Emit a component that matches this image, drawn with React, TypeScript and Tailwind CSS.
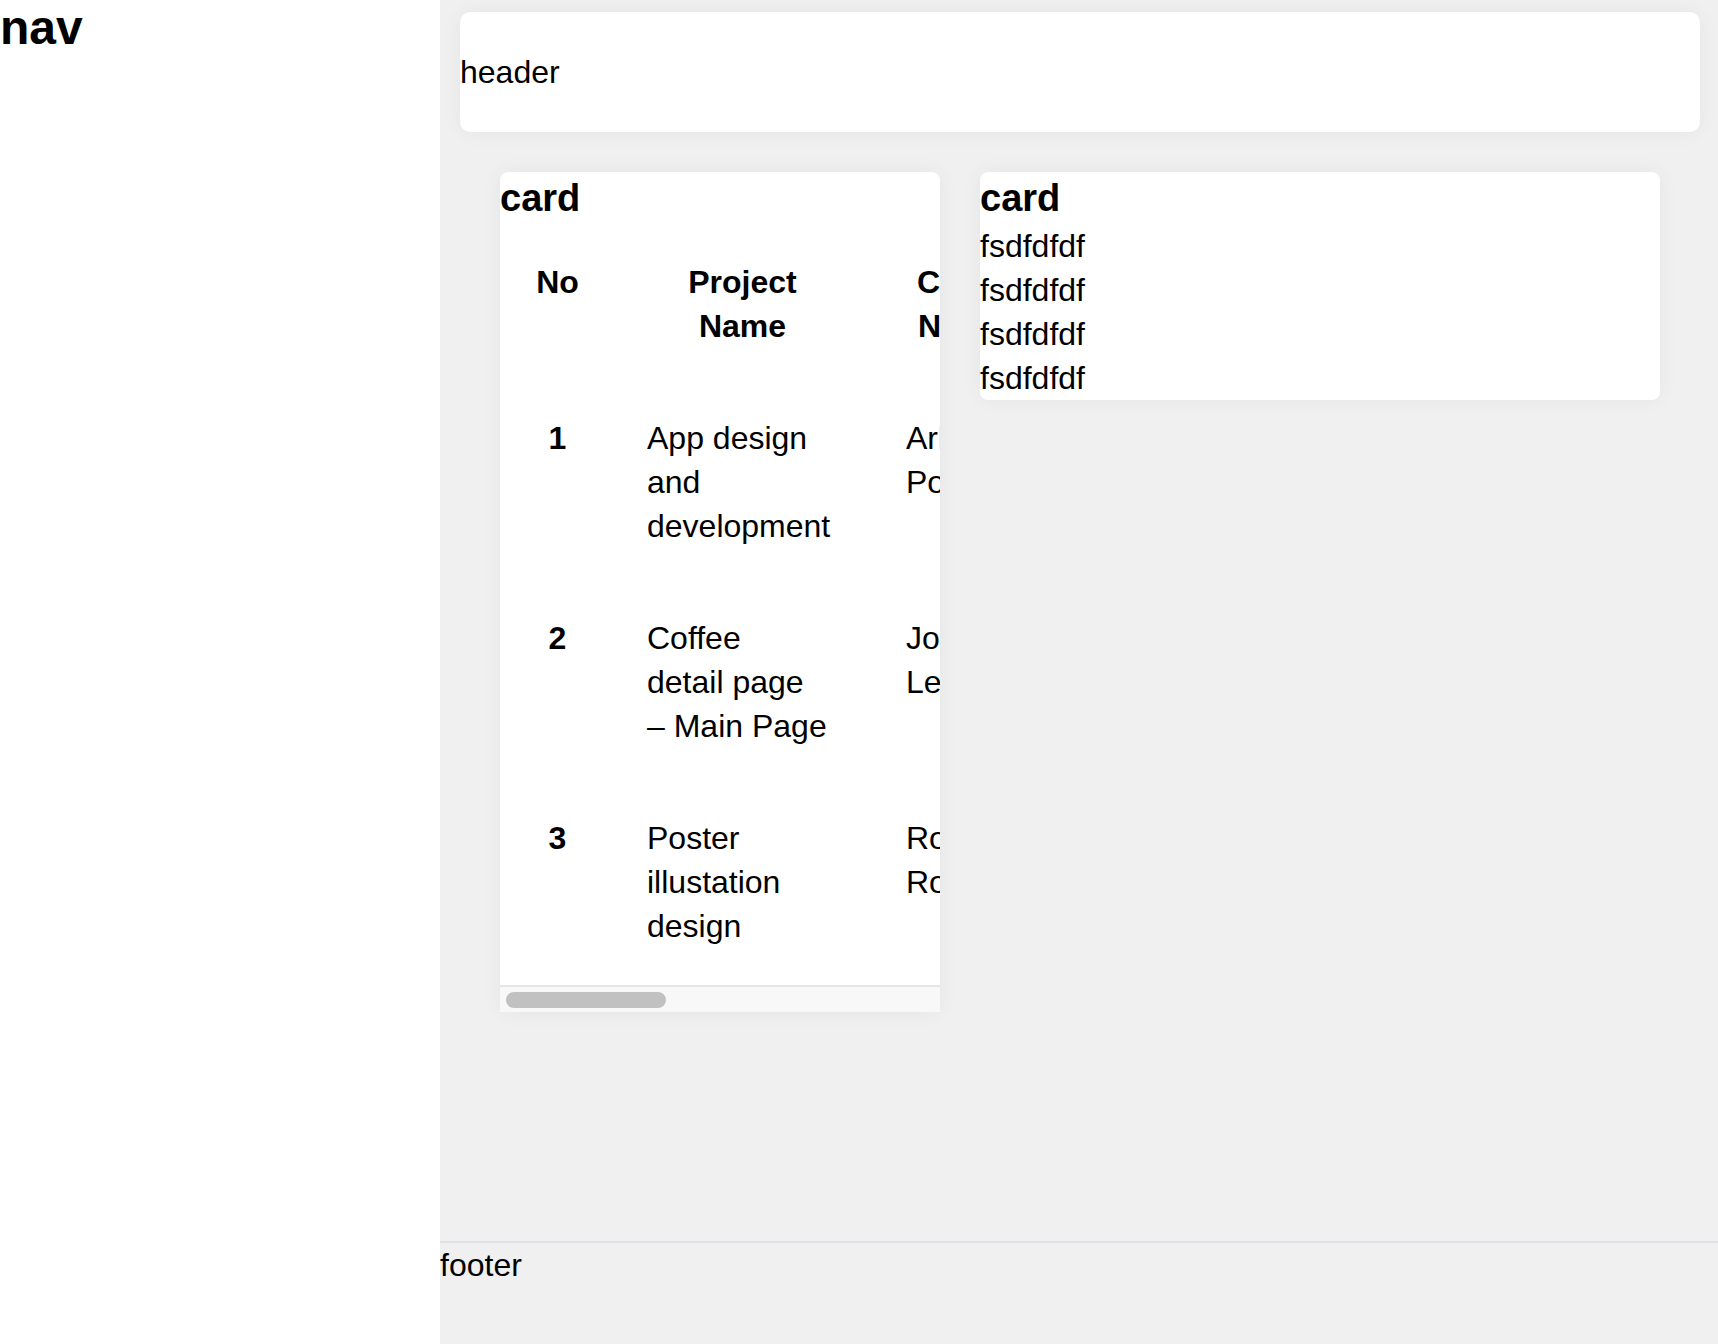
import React from 'react'

// Rows shown in the project table
const projects = [
  { no: 1, name: ['App design', 'and', 'development'], client: 'Arlene Powell', price: '$4,200', deadline: 'Mar 12', status: 'In progress' },
  { no: 2, name: ['Coffee', 'detail page', '– Main Page'], client: 'John Lee', price: '$1,150', deadline: 'Apr 02', status: 'Review' },
  { no: 3, name: ['Poster', 'illustation', 'design'], client: 'Ronald Rogers', price: '$860', deadline: 'Apr 20', status: 'Done' },
]

function ProjectCard() {
  return (
    <div className="w-[440px] shrink-0 bg-white rounded-t-[8px] shadow-[0_0_20px_rgba(0,0,0,0.05)] flex flex-col">
      <h3 className="text-[38px] leading-[52px] font-bold">card</h3>

      {/* Table, clipped horizontally */}
      <div className="overflow-hidden pb-[1px]">
        <table className="border-separate border-spacing-[4px] text-[32px] leading-[44px]">
          <thead>
            <tr>
              <th className="px-[32px] py-[32px] align-top text-center font-bold">
                <div className="w-[43px]">No</div>
              </th>
              <th className="px-[32px] py-[32px] align-top text-center font-bold">
                <div className="w-[191px]">Project Name</div>
              </th>
              <th className="px-[32px] py-[32px] align-top text-center font-bold">
                <div className="w-[111px]">Client Name</div>
              </th>
              <th className="px-[32px] py-[32px] align-top text-center font-bold">Price</th>
              <th className="px-[32px] py-[32px] align-top text-center font-bold">Deadline</th>
              <th className="px-[32px] py-[32px] align-top text-center font-bold">Status</th>
            </tr>
          </thead>
          <tbody>
            {projects.map((p) => (
              <tr key={p.no}>
                <td className="px-[32px] py-[32px] align-top text-center font-bold">{p.no}</td>
                <td className="px-[32px] py-[32px] align-top text-left">
                  {p.name.map((line) => (
                    <div key={line}>{line}</div>
                  ))}
                </td>
                <td className="px-[32px] py-[32px] align-top text-left">{p.client}</td>
                <td className="px-[32px] py-[32px] align-top text-left">{p.price}</td>
                <td className="px-[32px] py-[32px] align-top text-left">{p.deadline}</td>
                <td className="px-[32px] py-[32px] align-top text-left">{p.status}</td>
              </tr>
            ))}
          </tbody>
        </table>
      </div>

      {/* Horizontal scrollbar */}
      <div className="h-[27px] border-t-2 border-[#e6e6e6] bg-[#f8f8f8] pt-[5px] pl-[6px]">
        <div className="h-[16px] w-[160px] rounded-full bg-[#c1c1c1]" />
      </div>
    </div>
  )
}

function TextCard() {
  return (
    <div className="flex-1 bg-white rounded-[8px] shadow-[0_0_20px_rgba(0,0,0,0.05)]">
      <h3 className="text-[38px] leading-[52px] font-bold">card</h3>
      <div className="text-[32px] leading-[44px]">
        <p>fsdfdfdf</p>
        <p>fsdfdfdf</p>
        <p>fsdfdfdf</p>
        <p>fsdfdfdf</p>
      </div>
    </div>
  )
}

export default function App() {
  return (
    <div
      className="flex h-[1344px] w-full text-black"
      style={{ fontFamily: '"Liberation Sans", Arial, sans-serif' }}
    >
      {/* Sidebar */}
      <nav className="w-[440px] shrink-0 bg-white">
        <h2 className="text-[48px] leading-[55px] font-bold">nav</h2>
      </nav>

      {/* Main */}
      <div className="flex-1 flex flex-col bg-[#f0f0f0] min-w-0">
        <div className="flex-1 pl-[20px] pr-[18px] pt-[12px]">
          <header className="h-[120px] bg-white rounded-[10px] shadow-[0_0_20px_rgba(0,0,0,0.05)] flex items-center text-[32px] leading-[44px]">
            header
          </header>

          <div className="flex items-start gap-[40px] px-[40px] pt-[40px]">
            <ProjectCard />
            <TextCard />
          </div>
        </div>

        <footer className="h-[103px] shrink-0 border-t-2 border-[#dde0e4] text-[32px] leading-[44px]">
          footer
        </footer>
      </div>
    </div>
  )
}
